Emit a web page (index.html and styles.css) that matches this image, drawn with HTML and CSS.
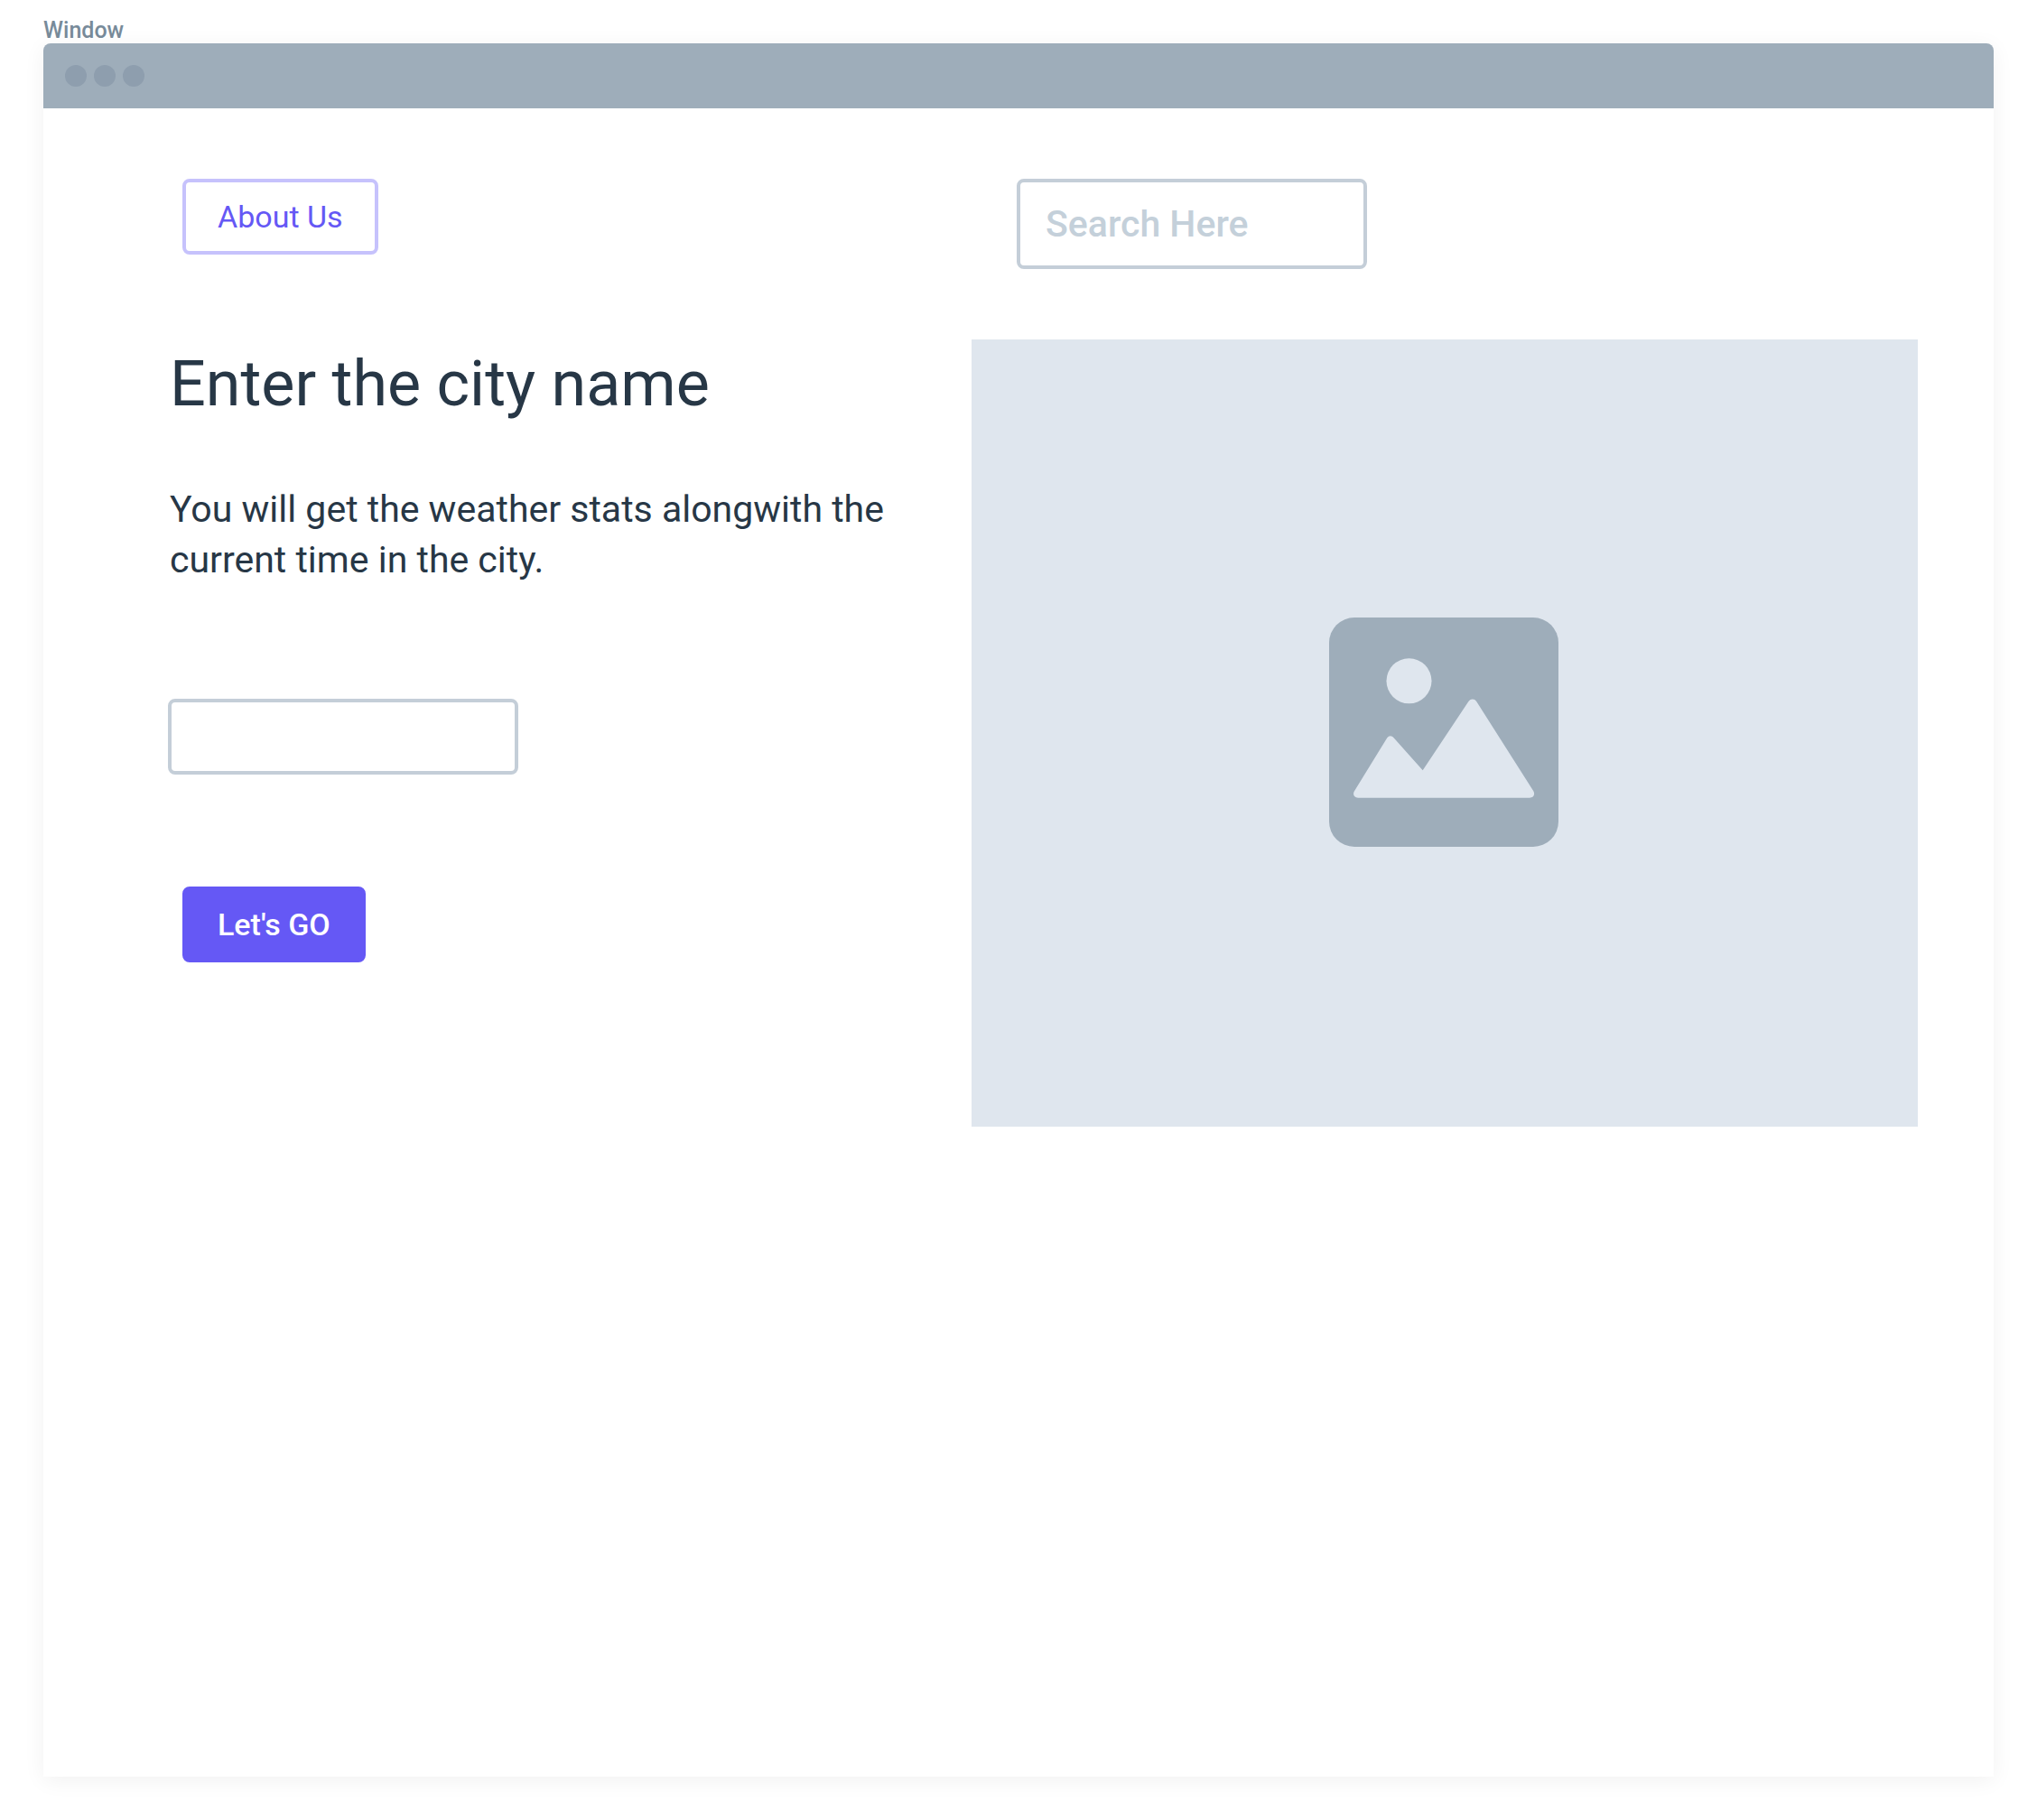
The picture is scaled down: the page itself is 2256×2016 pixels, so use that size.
FILE: index.html
```html
<!DOCTYPE html>
<html lang="en">
<head>
  <meta charset="utf-8">
  <meta name="viewport" content="width=device-width, initial-scale=1">
  <title>Window</title>
  <link rel="stylesheet" href="styles.css">
</head>
<body>
  <div class="window-label">Window</div>
  <div class="window">
    <div class="title-bar">
      <span class="dot"></span>
      <span class="dot"></span>
      <span class="dot"></span>
    </div>
    <main class="content">
      <nav class="nav">
        <button class="button button-outline" type="button">About Us</button>
      </nav>
      <form class="search" role="search">
        <input class="field field-search" type="search" placeholder="Search Here" aria-label="Search Here">
      </form>
      <form class="intro">
        <h1 class="heading"><label for="city">Enter the city name</label></h1>
        <p class="lead">You will get the weather stats alongwith the current time in the city.</p>
        <input class="field field-city" id="city" type="text">
        <button class="button button-primary" type="button">Let's GO</button>
      </form>
      <div class="picture">
        <svg class="picture-icon" viewBox="0 0 254 254" aria-hidden="true">
          <rect class="icon-frame" width="254" height="254" rx="28"/>
          <circle class="icon-shape" cx="88.5" cy="70.3" r="25"/>
          <path class="icon-shape" d="M32 199.7H222C226.500 199.700 228.300 196 226.300 192.300L163.200 92.900C161 89.600 156.700 89.600 154.400 92.900L103.700 169.300L71.800 133.500C69.300 130.600 66.400 130.500 64.300 133.300L27.700 192.700C26 196 27.700 199.700 32 199.700Z"/>
        </svg>
      </div>
    </main>
  </div>
</body>
</html>
```
FILE: styles.css
```css
* {
  box-sizing: border-box;
}

body {
  display: flex;
  flex-direction: column;
  min-height: 100vh;
  margin: 0;
  padding: 20px 48px 48px;
  background: #fff;
  color: #273746;
  font-family: Roboto, "Liberation Sans", sans-serif;
}

.window-label {
  color: #788b9a;
  font-size: 25px;
  font-weight: 500;
  line-height: 28px;
}

.window {
  flex: 1;
  border-radius: 8px 8px 0 0;
  background: #fff;
  box-shadow: 0 4px 24px rgba(0, 0, 0, 0.06);
}

.title-bar {
  display: flex;
  align-items: center;
  gap: 8px;
  height: 72px;
  padding: 0 24px;
  border-radius: 8px 8px 0 0;
  background: #9eadba;
}

.dot {
  width: 24px;
  height: 24px;
  border-radius: 50%;
  background: #8e9eae;
}

.content {
  display: grid;
  grid-template-columns: 890fr 1048fr;
  row-gap: 78px;
  align-items: start;
  padding: 78px 84px 78px 138px;
}

.nav {
  padding-left: 16px;
}

.search {
  padding-left: 50px;
}

.button {
  height: 84px;
  padding: 0 35px;
  border: 4px solid;
  border-radius: 8px;
  font-family: inherit;
  font-size: 34px;
  line-height: 44px;
}

.button-outline {
  border-color: #c6c2fc;
  background: #fff;
  color: #6558f5;
}

.button-primary {
  margin-left: 16px;
  border-color: #6558f5;
  background: #6558f5;
  color: #fff;
  font-weight: 500;
}

.field {
  display: block;
  width: 388px;
  max-width: 100%;
  padding: 0 28px;
  border: 4px solid #c4ced8;
  border-radius: 8px;
  background: #fff;
  color: #273746;
  font-family: inherit;
  font-size: 41px;
  font-weight: 500;
  appearance: none;
}

.field::placeholder {
  color: #c4d0da;
  opacity: 1;
}

.field-search {
  height: 100px;
}

.field-city {
  height: 84px;
  margin-bottom: 124px;
}

.heading {
  margin: 0 0 62px;
  padding-left: 2px;
  font-size: 70px;
  font-weight: 400;
  line-height: 98px;
}

.lead {
  max-width: 840px;
  margin: 0 0 126px;
  padding-left: 2px;
  font-size: 41px;
  line-height: 56px;
}

.picture {
  display: grid;
  place-items: center;
  aspect-ratio: 1048 / 872;
  padding: 0 2px 2px 0;
  background: #dfe6ee;
}

.picture-icon {
  width: 254px;
  height: 254px;
}

.icon-frame {
  fill: #9eadba;
}

.icon-shape {
  fill: #dfe6ee;
}
```
